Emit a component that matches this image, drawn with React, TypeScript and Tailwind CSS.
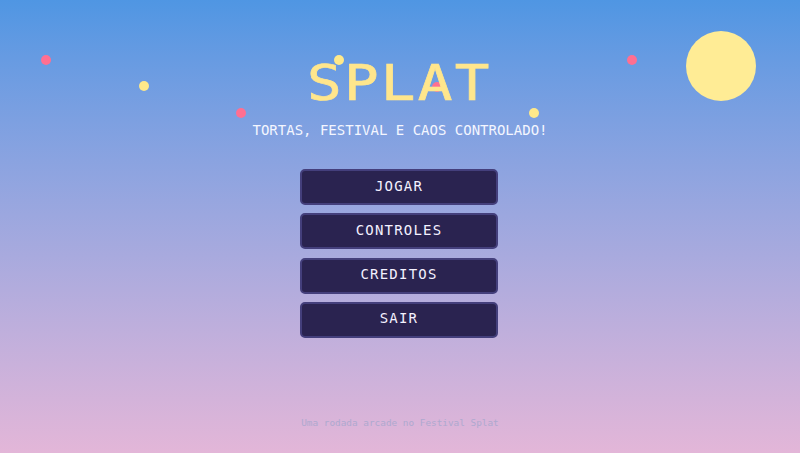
import React from 'react';

const MENU_ITEMS = ['JOGAR', 'CONTROLES', 'CREDITOS', 'SAIR'];

const DOTS = [
  { left: 41, top: 55, color: 'bg-[#ff6f91]' },
  { left: 139, top: 81, color: 'bg-[#ffe98a]' },
  { left: 236, top: 108, color: 'bg-[#ff6f91]' },
  { left: 334, top: 55, color: 'bg-[#ffe98a]' },
  { left: 432, top: 82, color: 'bg-[#ff6f91]' },
  { left: 529, top: 108, color: 'bg-[#ffe98a]' },
  { left: 627, top: 55, color: 'bg-[#ff6f91]' },
];

const App: React.FC = () => {
  return (
    <div className="relative flex h-[453px] w-[800px] flex-col items-center overflow-hidden bg-gradient-to-b from-[#4f96e3] to-[#e3b6d8] font-['DejaVu_Sans_Mono',monospace]">
      {/* Sun and confetti */}
      <div className="absolute left-[686px] top-[31px] h-[70px] w-[70px] rounded-full bg-[#ffec95]" />
      {DOTS.map((dot) => (
        <div
          key={dot.left}
          className={`absolute h-[10px] w-[10px] rounded-full ${dot.color}`}
          style={{ left: dot.left, top: dot.top }}
        />
      ))}

      {/* Title */}
      <h1 className="relative mr-[1px] mt-[52px] scale-x-[1.15] text-[50px] font-normal leading-[62px] tracking-[2px] text-[#ffe68c] [-webkit-text-stroke:0.7px_#ffe68c]">
        SPLAT
      </h1>
      <p className="relative mt-[6px] text-[14px] leading-[20px] text-[#f4f6ff]">
        TORTAS, FESTIVAL E CAOS CONTROLADO!
      </p>

      {/* Menu */}
      <div className="relative mr-[2px] mt-[29px] flex w-[198px] flex-col gap-[8.33px]">
        {MENU_ITEMS.map((item) => (
          <button
            key={item}
            className="h-9 rounded-[5px] border-2 border-[#443f7c] bg-[#2a2350] pb-[2px] text-[14px] tracking-[1.2px] text-[#f4f1ff]"
          >
            {item}
          </button>
        ))}
      </div>

      <p className="relative mt-[78px] text-[9.4px] leading-[14px] text-[#aea9cf]">
        Uma rodada arcade no Festival Splat
      </p>
    </div>
  );
};

export default App;
